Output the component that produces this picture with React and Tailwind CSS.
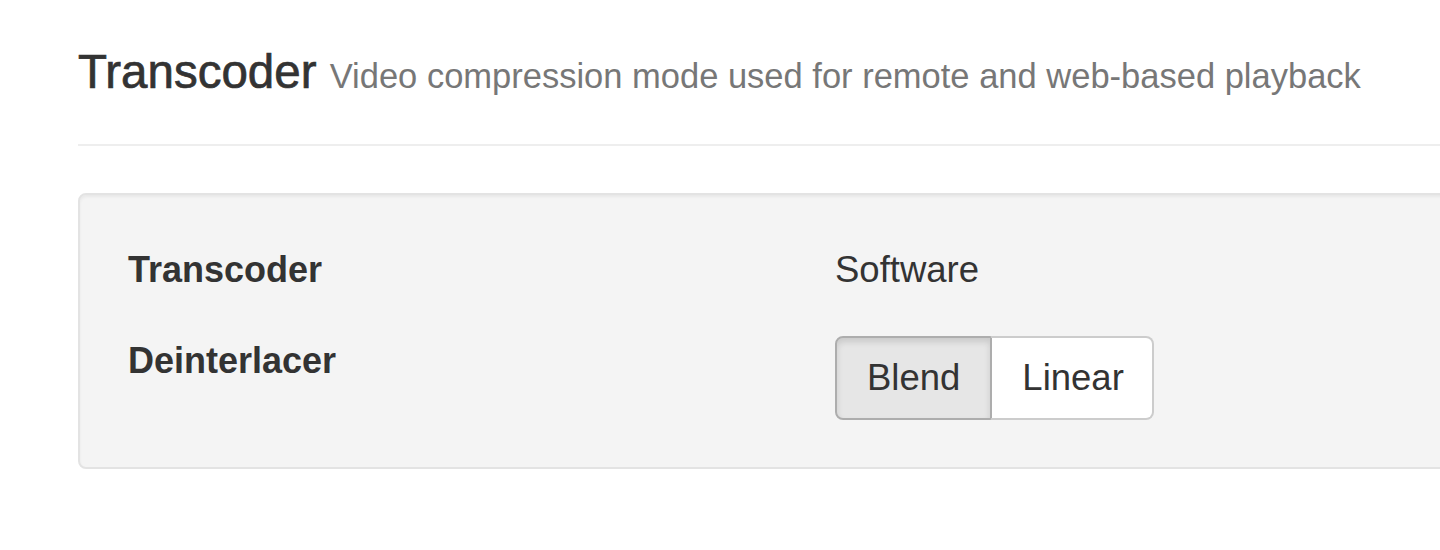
export default function App() {
  return (
    <div
      className="w-[1440px] h-[550px] overflow-hidden bg-white text-[#333333]"
      style={{ fontFamily: '"Liberation Sans", Arial, Helvetica, sans-serif' }}
    >
      <div className="ml-[78px] w-[1500px] pt-[44px]">
        <h4 className="m-0 text-[47.5px] leading-[56px] font-medium text-[#333333] whitespace-nowrap">
          <span className="[-webkit-text-stroke:0.7px_#333333]">Transcoder</span>{" "}
          <small className="text-[34.5px] font-normal text-[#777777]">
            Video compression mode used for remote and web-based playback
          </small>
        </h4>
        <div className="mt-[40px] h-[2px] bg-[#eeeeee]" />
        <div className="mt-[47px] rounded-[8px] border-2 border-[#e3e3e3] bg-[#f4f4f4] pl-[48px] pt-[50px] pb-[47px] shadow-[inset_0_2px_3px_rgba(0,0,0,0.05)]">
          <div className="flex items-start leading-[50px]">
            <div className="w-[707px] text-[36px] font-bold">Transcoder</div>
            <div className="text-[36.5px]">Software</div>
          </div>
          <div className="mt-[41px] flex items-start leading-[50px]">
            <div className="w-[707px] text-[36px] font-bold">Deinterlacer</div>
            <div className="flex">
              <button className="rounded-l-[8px] border-2 border-[#adadad] bg-[#e6e6e6] px-[30px] py-[15px] text-[36.5px] leading-[50px] text-[#333333] shadow-[inset_0_4px_6px_rgba(0,0,0,0.125)]">
                Blend
              </button>
              <button className="-ml-[2px] rounded-r-[8px] border-2 border-[#cccccc] border-l-[#adadad] bg-white pl-[30px] pr-[28px] py-[15px] text-[36.5px] leading-[50px] text-[#333333]">
                Linear
              </button>
            </div>
          </div>
        </div>
      </div>
    </div>
  );
}
